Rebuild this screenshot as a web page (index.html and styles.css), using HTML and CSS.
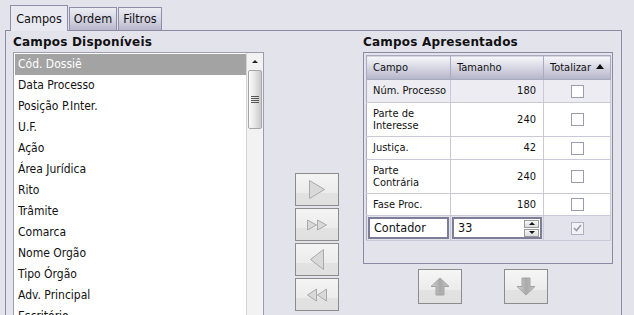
FILE: index.html
```html
<!DOCTYPE html>
<html lang="pt">
<head>
    <meta charset="UTF-8">
    <title>Campos</title>
    <link rel="stylesheet" href="styles.css">
</head>
<body>
    <div class="tabs">
        <div class="tab tab-campos active">Campos</div>
        <div class="tab tab-ordem">Ordem</div>
        <div class="tab tab-filtros">Filtros</div>
    </div>
    <div class="panel">
        <div class="col-left">
            <div class="caption">Campos Disponíveis</div>
            <div class="listbox">
                <ul class="items">
                    <li class="selected">Cód. Dossiê</li>
                    <li>Data Processo</li>
                    <li>Posição P.Inter.</li>
                    <li>U.F.</li>
                    <li>Ação</li>
                    <li>Área Jurídica</li>
                    <li>Rito</li>
                    <li>Trâmite</li>
                    <li>Comarca</li>
                    <li>Nome Orgão</li>
                    <li>Tipo Órgão</li>
                    <li>Adv. Principal</li>
                    <li>Escritório</li>
                </ul>
                <div class="scrollbar">
                    <div class="sb-up"></div>
                    <div class="sb-thumb"><span class="grip"></span></div>
                </div>
            </div>
        </div>

        <div class="movers">
            <button class="mover" type="button">
                <svg width="18" height="21" viewBox="0 0 18 21"><path d="M1.5 1.5 L16.5 10.5 L1.5 19.5 Z" fill="#d9d9d9" stroke="#a9a9a9"/></svg>
            </button>
            <button class="mover" type="button">
                <svg width="22" height="12" viewBox="0 0 22 12"><path d="M1.5 1 L10.5 6 L1.5 11 Z M11.5 1 L20.5 6 L11.5 11 Z" fill="#d9d9d9" stroke="#a9a9a9"/></svg>
            </button>
            <button class="mover" type="button">
                <svg width="16" height="23" viewBox="0 0 16 23"><path d="M14.5 1.5 L1.5 11.5 L14.5 21.5 Z" fill="#d9d9d9" stroke="#a9a9a9"/></svg>
            </button>
            <button class="mover" type="button">
                <svg width="22" height="14" viewBox="0 0 22 14"><path d="M10.5 1 L1.5 7 L10.5 13 Z M20.5 1 L11.5 7 L20.5 13 Z" fill="#d9d9d9" stroke="#a9a9a9"/></svg>
            </button>
        </div>

        <div class="col-right">
            <div class="caption">Campos Apresentados</div>
            <div class="grid-box">
                <table class="grid">
                    <thead>
                        <tr>
                            <th class="c-campo">Campo</th>
                            <th class="c-tam">Tamanho</th>
                            <th class="c-tot">Totalizar <span class="sort"></span></th>
                        </tr>
                    </thead>
                    <tbody>
                        <tr class="lead h23">
                            <td>Núm. Processo</td><td class="num">180</td><td class="chk"><span class="box"></span></td>
                        </tr>
                        <tr class="h34">
                            <td>Parte de<br>Interesse</td><td class="num">240</td><td class="chk"><span class="box"></span></td>
                        </tr>
                        <tr class="h23">
                            <td>Justiça.</td><td class="num">42</td><td class="chk"><span class="box"></span></td>
                        </tr>
                        <tr class="h34">
                            <td>Parte<br>Contrária</td><td class="num">240</td><td class="chk"><span class="box"></span></td>
                        </tr>
                        <tr class="h22">
                            <td>Fase Proc.</td><td class="num">180</td><td class="chk"><span class="box"></span></td>
                        </tr>
                        <tr class="editing">
                            <td class="ed"><div class="editbox">Contador</div></td>
                            <td class="ed">
                                <div class="editbox spin">
                                    <span>33</span>
                                    <span class="spin-btns">
                                        <span class="spin-btn"><i class="tri-up"></i></span>
                                        <span class="spin-btn"><i class="tri-down"></i></span>
                                    </span>
                                </div>
                            </td>
                            <td class="chk"><span class="box checked">
                                <svg width="9" height="8" viewBox="0 0 9 8"><path d="M1 4 L3.5 6.5 L8 1" fill="none" stroke="#9a9aa8" stroke-width="1.6"/></svg>
                            </span></td>
                        </tr>
                    </tbody>
                </table>
            </div>
            <div class="order-buttons">
                <button class="order-btn" type="button">
                    <svg width="20" height="19" viewBox="0 0 20 19">
                        <defs>
                            <linearGradient id="ga" x1="0" y1="0" x2="1" y2="0">
                                <stop offset="0" stop-color="#d8d8d8"/>
                                <stop offset="0.5" stop-color="#a9a9a9"/>
                                <stop offset="1" stop-color="#c4c4c4"/>
                            </linearGradient>
                        </defs>
                        <path d="M10 1 L19 9.5 L14 9.5 L14 18 L6 18 L6 9.5 L1 9.5 Z" fill="url(#ga)" stroke="#a4a4a4"/>
                    </svg>
                </button>
                <button class="order-btn" type="button">
                    <svg width="20" height="19" viewBox="0 0 20 19">
                        <defs>
                            <linearGradient id="gb" x1="0" y1="0" x2="1" y2="0">
                                <stop offset="0" stop-color="#d8d8d8"/>
                                <stop offset="0.5" stop-color="#a9a9a9"/>
                                <stop offset="1" stop-color="#c4c4c4"/>
                            </linearGradient>
                        </defs>
                        <path d="M6 1 L14 1 L14 9.5 L19 9.5 L10 18 L1 9.5 L6 9.5 Z" fill="url(#gb)" stroke="#a4a4a4"/>
                    </svg>
                </button>
            </div>
        </div>
    </div>
</body>
</html>
```

FILE: styles.css
```css
* {
    margin: 0;
    padding: 0;
    box-sizing: border-box;
}

body {
    background: #e3e3ec;
    font-family: "DejaVu Sans Condensed", "DejaVu Sans", sans-serif;
    font-stretch: condensed;
    color: #111;
    width: 634px;
    height: 315px;
    overflow: hidden;
}

/* tabs */

.tabs {
    display: flex;
    align-items: flex-end;
    padding: 5px 0 0 10px;
    height: 30px;
}

.tab {
    height: 23px;
    margin-right: 1px;
    border: 1px solid #8e8ea8;
    border-bottom: none;
    background: linear-gradient(#ececf3, #d4d4e2 55%, #b7b7cc);
    font-size: 12.5px;
    line-height: 22px;
    text-align: center;
    color: #111;
}

.tab-campos { width: 58px; }
.tab-ordem { width: 48px; }
.tab-filtros { width: 44px; }

.tab.active {
    height: 26px;
    line-height: 26px;
    background: #e9e9f1;
    position: relative;
    z-index: 1;
    margin-bottom: -1px;
}

/* panel */

.panel {
    margin-left: 5px;
    width: 617px;
    height: 300px;
    border: 1px solid #8a8aa2;
    display: flex;
    padding: 4px 0 0 7px;
}

.caption {
    font-family: "DejaVu Sans", sans-serif;
    font-stretch: normal;
    font-weight: bold;
    font-size: 12px;
    letter-spacing: 0.2px;
    height: 17px;
    line-height: 15px;
    white-space: nowrap;
}

.col-left {
    width: 251px;
}

.listbox {
    display: flex;
    height: 280px;
    border: 1px solid #9c9cae;
    background: #fff;
}

.items {
    list-style: none;
    flex: 1;
    padding: 1px 0 0 1px;
}

.items li {
    height: 21px;
    line-height: 21px;
    padding-left: 3px;
    font-size: 12px;
    white-space: nowrap;
}

.items li.selected {
    background: #a3a3a3;
    color: #fff;
}

.scrollbar {
    width: 17px;
    background: #f2f2f2;
    border-left: 1px solid #d4d4d4;
    padding: 0 1px;
}

.sb-up {
    height: 17px;
    display: flex;
    justify-content: center;
    align-items: center;
}

.sb-up::before {
    content: "";
    border-left: 3px solid transparent;
    border-right: 3px solid transparent;
    border-bottom: 3px solid #222;
}

.sb-thumb {
    height: 59px;
    border: 1px solid #a6a6a6;
    border-radius: 2px;
    background: linear-gradient(90deg, #fafafa, #e8e8e8 45%, #c9c9c9);
    display: flex;
    justify-content: center;
    align-items: center;
}

.grip {
    width: 8px;
    height: 8px;
    background: repeating-linear-gradient(#555 0 1px, transparent 1px 2px);
}

/* move buttons */

.movers {
    display: flex;
    flex-direction: column;
    gap: 2px;
    margin: 138px 24px 0 31px;
}

.mover {
    width: 44px;
    height: 33px;
    border: 1px solid #8c8c8c;
    background: linear-gradient(#f4f4f4, #ececec 60%, #e2e2e2 62%, #e0e0e0);
    display: flex;
    justify-content: center;
    align-items: center;
}

/* presented fields */

.col-right {
    width: 250px;
}

.grid-box {
    height: 212px;
    border: 1px solid #8a8aa2;
    padding: 2px 2px 0 2px;
}

.grid {
    width: 244px;
    border-collapse: collapse;
    border: 1px solid #a9a9c0;
    font-size: 11px;
    table-layout: fixed;
}

.grid th {
    height: 24px;
    font-weight: normal;
    text-align: left;
    padding-left: 6px;
    border-right: 1px solid #a9a9c0;
    border-bottom: 1px solid #a9a9c0;
    background: linear-gradient(#f6f6fa, #e0e0ea 35%, #b4b4c9);
    white-space: nowrap;
}

.c-campo { width: 84px; }
.c-tam { width: 93px; }
.c-tot { width: 67px; }

.sort {
    display: inline-block;
    border-left: 4px solid transparent;
    border-right: 4px solid transparent;
    border-bottom: 5px solid #111;
    vertical-align: 2px;
    margin-left: 2px;
}

.grid td {
    background: #fff;
    border-right: 1px solid #c9c9d8;
    border-bottom: 1px solid #c9c9d8;
    padding: 0 0 0 6px;
    line-height: 12px;
    vertical-align: middle;
}

.grid tr.lead td {
    background: #ececf2;
}

.h23 td { height: 23px; }
.h34 td { height: 34px; }
.h22 td { height: 22px; }

.grid td.num {
    text-align: right;
    padding: 0 7px 0 0;
}

.grid td.chk {
    text-align: center;
    padding: 0;
}

.box {
    display: inline-flex;
    justify-content: center;
    align-items: center;
    width: 13px;
    height: 13px;
    border: 1px solid #9c9cb0;
    background: #fff;
    vertical-align: middle;
}

.box.checked {
    background: #f2f2f6;
    border-color: #b0b0c0;
}

.grid tr.editing td {
    height: 24px;
    background: #e3e3ec;
    padding: 1px 1px 1px 1px;
}

.grid tr.editing td.chk {
    padding: 0;
}

.editbox {
    height: 22px;
    border: 2px solid #7d7d97;
    background: #fff;
    font-size: 12.5px;
    line-height: 18px;
    padding-left: 4px;
}

.editbox.spin {
    display: flex;
    justify-content: space-between;
    align-items: center;
    padding-right: 1px;
}

.spin-btns {
    display: flex;
    flex-direction: column;
    gap: 1px;
}

.spin-btn {
    width: 15px;
    height: 8px;
    border: 1px solid #9a9a9a;
    background: linear-gradient(#f8f8f8, #dcdcdc);
    display: flex;
    justify-content: center;
    align-items: center;
}

.tri-up {
    border-left: 3px solid transparent;
    border-right: 3px solid transparent;
    border-bottom: 3px solid #111;
}

.tri-down {
    border-left: 3px solid transparent;
    border-right: 3px solid transparent;
    border-top: 3px solid #111;
}

.order-buttons {
    display: flex;
    gap: 42px;
    padding-left: 55px;
    margin-top: 5px;
}

.order-btn {
    width: 44px;
    height: 35px;
    border: 1px solid #8c8c8c;
    background: linear-gradient(#f6f6f6, #ececec 60%, #e2e2e2 62%, #e0e0e0);
    display: flex;
    justify-content: center;
    align-items: center;
}
```
